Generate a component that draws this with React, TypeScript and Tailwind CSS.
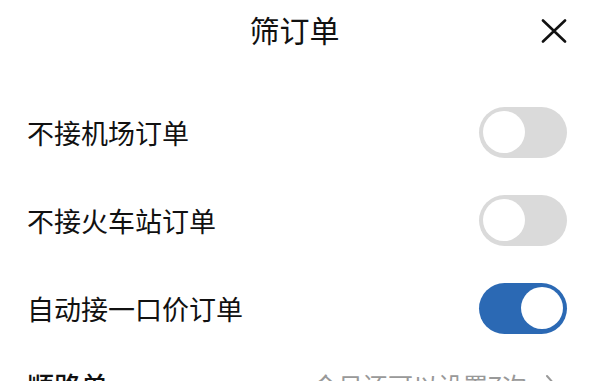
import React, { useState } from "react";

function Toggle({ on }: { on: boolean }) {
  return (
    <div
      className={
        "flex h-[51px] w-[88px] shrink-0 items-center rounded-full px-[4px] " +
        (on ? "justify-end bg-[#2b69b4]" : "justify-start bg-[#dadada]")
      }
    >
      <div className="h-[42px] w-[42px] rounded-full bg-white" />
    </div>
  );
}

export default function App() {
  const [rows] = useState([
    { label: "不接机场订单", on: false },
    { label: "不接火车站订单", on: false },
    { label: "自动接一口价订单", on: true },
  ]);
  return (
    <div
      className="h-[381px] w-[589px] overflow-hidden bg-white text-[#111]"
      style={{ fontFamily: '"Noto Sans CJK SC", "Noto Sans", sans-serif' }}
    >
      <div className="relative flex h-[58px] items-center justify-center">
        <span className="text-[30px] leading-none">筛订单</span>
        <svg
          className="absolute right-[22px] top-[19px]"
          width="26"
          height="24"
          viewBox="0 0 26 24"
          fill="none"
          stroke="#111"
          strokeWidth="2.6"
          strokeLinecap="round"
        >
          <path d="M2 1.5L24 22.5M24 1.5L2 22.5" />
        </svg>
      </div>
      <div className="mt-[30px] flex flex-col pl-[27px] pr-[22px]">
        {rows.map((r) => (
          <div key={r.label} className="flex h-[88px] items-center justify-between">
            <span className="text-[27px] leading-none">{r.label}</span>
            <Toggle on={r.on} />
          </div>
        ))}
        <div className="flex h-[66px] items-center justify-between">
          <span className="text-[27px] font-medium leading-none">顺路单</span>
          <div className="flex items-center gap-[18px] pr-[10px] text-[#999]">
            <span className="text-[25px] leading-none">今日还可以设置7次</span>
            <svg width="12" height="22" viewBox="0 0 12 22" fill="none" stroke="#999" strokeWidth="2" strokeLinecap="round" strokeLinejoin="round">
              <path d="M2 2L10 11L2 20" />
            </svg>
          </div>
        </div>
      </div>
    </div>
  );
}
